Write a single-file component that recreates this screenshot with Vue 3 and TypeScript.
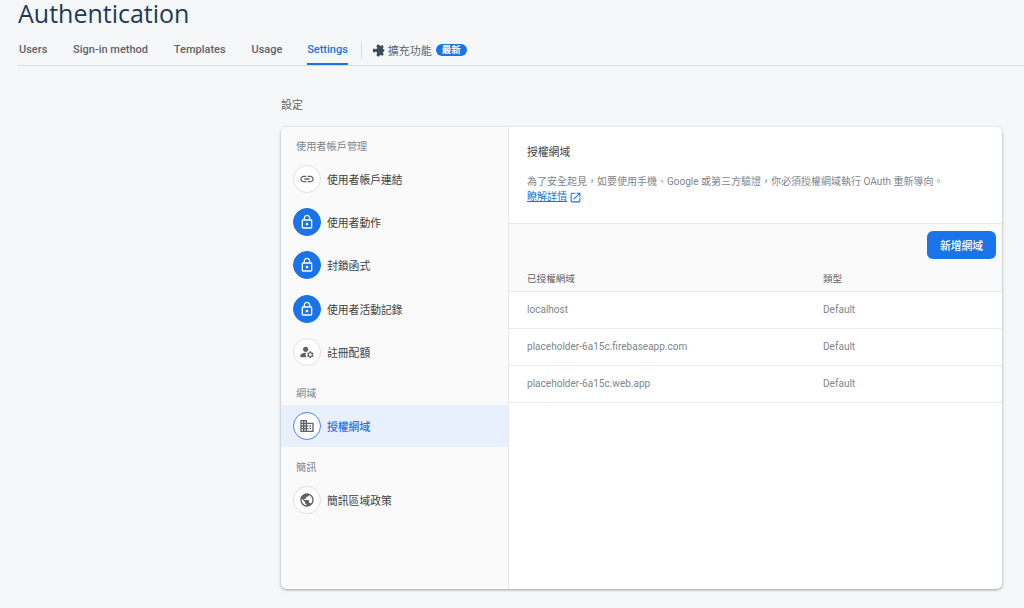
<script setup lang="ts">
interface NavItem { label: string; icon: string; locked?: boolean; active?: boolean }
interface NavGroup { title: string; cls: string; items: NavItem[] }

const icons: Record<string, string> = {
  link: 'M3.9 12c0-1.71 1.39-3.1 3.1-3.1h4V7H7c-2.76 0-5 2.24-5 5s2.24 5 5 5h4v-1.9H7c-1.71 0-3.1-1.39-3.1-3.1zM8 13h8v-2H8v2zm9-6h-4v1.9h4c1.71 0 3.1 1.39 3.1 3.1s-1.39 3.1-3.1 3.1h-4V17h4c2.76 0 5-2.24 5-5s-2.24-5-5-5z',
  lock: 'M18 8h-1V6c0-2.76-2.24-5-5-5S7 3.24 7 6v2H6c-1.1 0-2 .9-2 2v10c0 1.1.9 2 2 2h12c1.1 0 2-.9 2-2V10c0-1.1-.9-2-2-2zM9 6c0-1.66 1.34-3 3-3s3 1.34 3 3v2H9V6zm9 14H6V10h12v10zm-6-3c1.1 0 2-.9 2-2s-.9-2-2-2-2 .9-2 2 .9 2 2 2z',
  manage: 'M10 12c2.21 0 4-1.79 4-4s-1.79-4-4-4-4 1.79-4 4 1.79 4 4 4zM10.67 13.02C10.45 13.01 10.23 13 10 13c-2.42 0-4.68.67-6.61 1.82-.88.52-1.39 1.5-1.39 2.53V20h9.26c-.79-1.13-1.26-2.51-1.26-4 0-1.07.25-2.07.67-2.98zM20.75 16c0-.22-.03-.42-.06-.63l1.14-1.01-1-1.73-1.45.49c-.32-.27-.68-.48-1.08-.63L18 11h-2l-.3 1.49c-.4.15-.76.36-1.08.63l-1.45-.49-1 1.73 1.14 1.01c-.03.21-.06.41-.06.63s.03.42.06.63l-1.14 1.01 1 1.73 1.45-.49c.32.27.68.48 1.08.63L16 21h2l.3-1.49c.4-.15.76-.36 1.08-.63l1.45.49 1-1.73-1.14-1.01c.03-.21.06-.41.06-.63zM17 18c-1.1 0-2-.9-2-2s.9-2 2-2 2 .9 2 2-.9 2-2 2z',
  domain: 'M12 7V3H2v18h20V7H12zM6 19H4v-2h2v2zm0-4H4v-2h2v2zm0-4H4V9h2v2zm0-4H4V5h2v2zm4 12H8v-2h2v2zm0-4H8v-2h2v2zm0-4H8V9h2v2zm0-4H8V5h2v2zm10 12h-8v-2h2v-2h-2v-2h2v-2h-2V9h8v10zm-2-8h-2v2h2v-2zm0 4h-2v2h2v-2z',
  public: 'M12 2C6.48 2 2 6.48 2 12s4.48 10 10 10 10-4.48 10-10S17.52 2 12 2zm-1 17.93c-3.95-.49-7-3.85-7-7.93 0-.62.08-1.21.21-1.79L9 15v1c0 1.1.9 2 2 2v1.93zm6.9-2.54c-.26-.81-1-1.39-1.9-1.39h-1v-3c0-.55-.45-1-1-1H8v-2h2c.55 0 1-.45 1-1V7h2c1.1 0 2-.9 2-2v-.41c2.93 1.19 5 4.06 5 7.41 0 2.08-.8 3.97-2.1 5.39z',
}

const tabs = ['Users', 'Sign-in method', 'Templates', 'Usage', 'Settings']

const groups: NavGroup[] = [
  { title: '使用者帳戶管理', cls: 'g-first', items: [
    { label: '使用者帳戶連結', icon: 'link' },
    { label: '使用者動作', icon: 'lock', locked: true },
    { label: '封鎖函式', icon: 'lock', locked: true },
    { label: '使用者活動記錄', icon: 'lock', locked: true },
    { label: '註冊配額', icon: 'manage' },
  ] },
  { title: '網域', cls: 'g-domain', items: [{ label: '授權網域', icon: 'domain', active: true }] },
  { title: '簡訊', cls: 'g-sms', items: [{ label: '簡訊區域政策', icon: 'public' }] },
]

const rows = ['localhost', 'placeholder-6a15c.firebaseapp.com', 'placeholder-6a15c.web.app']
</script>

<template>
  <div class="page">
    <header class="head">
      <h1 class="title">Authentication</h1>
      <nav class="tabs">
        <a v-for="t in tabs" :key="t" class="tab" :class="{ on: t === 'Settings' }">{{ t }}</a>
        <span class="sep"></span>
        <span class="ext">
          <svg class="ext-ico" viewBox="0 0 24 24"><path transform="rotate(45 12 12)" d="M20.5 11H19V7c0-1.1-.9-2-2-2h-4V3.5C13 2.12 11.88 1 10.5 1S8 2.12 8 3.5V5H4c-1.1 0-1.99.9-1.99 2v3.8H3.5c1.49 0 2.7 1.21 2.7 2.7s-1.21 2.7-2.7 2.7H2V20c0 1.1.9 2 2 2h3.8v-1.5c0-1.49 1.21-2.7 2.7-2.7 1.49 0 2.7 1.21 2.7 2.7V22H17c1.1 0 2-.9 2-2v-4h1.5c1.38 0 2.5-1.12 2.5-2.5S21.88 11 20.5 11z" /></svg>
          <span class="ext-text">擴充功能</span>
          <span class="badge">最新</span>
        </span>
      </nav>
    </header>

    <main class="main">
      <div class="section-title">設定</div>
      <section class="card">
        <aside class="side">
          <div v-for="g in groups" :key="g.title" class="group" :class="g.cls">
            <div class="group-title">{{ g.title }}</div>
            <div v-for="i in g.items" :key="i.label" class="item" :class="{ active: i.active }">
              <span class="circle" :class="{ locked: i.locked }">
                <svg viewBox="0 0 24 24" class="ico"><path :d="icons[i.icon]" /></svg>
              </span>
              <span class="item-label">{{ i.label }}</span>
            </div>
          </div>
        </aside>
        <div class="content">
          <div class="intro">
            <div class="intro-title">授權網域</div>
            <p class="intro-text">為了安全起見&#xFF0C;如要使用手機、Google 或第三方驗證&#xFF0C;你必須授權網域執行 OAuth 重新導向。</p>
            <a class="more"><span class="more-text">瞭解詳情</span>
              <svg viewBox="0 0 24 24" class="new-ico"><path d="M19 19H5V5h7V3H5c-1.11 0-2 .9-2 2v14c0 1.1.89 2 2 2h14c1.1 0 2-.9 2-2v-7h-2v7zM14 3v2h3.59l-9.83 9.83 1.41 1.41L19 6.41V10h2V3h-7z" /></svg>
            </a>
          </div>
          <div class="toolbar">
            <div class="btn-row"><button class="btn" type="button">新增網域</button></div>
            <div class="row head-row"><span class="c1">已授權網域</span><span class="c2">類型</span></div>
          </div>
          <div v-for="r in rows" :key="r" class="row data-row">
            <span class="c1">{{ r }}</span><span class="c2">Default</span>
          </div>
        </div>
      </section>
    </main>
  </div>
</template>

<style>
html, body { margin: 0; background: #f6f7f9; }
</style>

<style scoped>
.page {
  width: 1024px;
  height: 608px;
  overflow: hidden;
  background: #f6f7f9;
  font-family: Roboto, "Noto Sans CJK TC", sans-serif;
  box-sizing: border-box;
}
.head { margin-left: 18px; border-bottom: 1px solid #dadce0; height: 66px; box-sizing: border-box; }
.title {
  margin: 0;
  height: 38px;
  font-family: "Open Sans", Roboto, sans-serif;
  font-weight: 400;
  font-size: 25px;
  line-height: 27px;
  color: #1f3a52;
}
.tabs { display: flex; align-items: stretch; height: 27px; }
.tab {
  margin-right: 23.8px;
  font-size: 11px;
  font-weight: 500;
  line-height: 24px;
  color: #5f6368;
  box-sizing: border-box;
  height: 27px;
  padding: 0 1px;
}
.tab.on { color: #1a73e8; border-bottom: 2px solid #1a73e8; margin-right: 13px; padding: 0; }
.sep { width: 1px; height: 18px; margin-top: 3px; background: #dadce0; }
.ext { display: flex; align-items: center; height: 24px; margin-left: 11px; }
.ext-ico { width: 13px; height: 13px; fill: #3c4a5c; }
.ext-text { margin-left: 2px; font-size: 11px; color: #5f6368; }
.badge {
  margin-left: 4px;
  background: #1a73e8;
  color: #fff;
  font-size: 9.5px;
  font-weight: 700;
  line-height: 12px;
  padding: 0 6px;
  border-radius: 6px;
}

.main { padding-left: 281px; width: 721px; }
.section-title { font-size: 11px; color: #5f6368; line-height: 14px; padding-top: 33px; height: 61px; box-sizing: border-box; }
.card {
  display: flex;
  height: 462px;
  border-radius: 6px;
  background: #fff;
  box-shadow: 0 1px 2px rgba(60, 64, 67, 0.3), 0 1px 3px 1px rgba(60, 64, 67, 0.15);
  overflow: hidden;
}
.side {
  width: 228px;
  flex: none;
  background: #fafafa;
  border-right: 1px solid #e8e8e8;
  box-sizing: border-box;
}
.group-title { font-size: 10.2px; color: #80868b; line-height: 14px; padding-left: 15px; }
.g-first { padding-top: 13px; }
.g-first .group-title { height: 17px; }
.g-domain { padding-top: 14px; }
.g-domain .group-title { height: 18px; }
.g-sms { padding-top: 14px; }
.g-sms .group-title { height: 17px; }
.item { display: flex; align-items: center; height: 43.3px; padding-left: 12px; }
.item.active { background: #e8f0fe; height: 42px; }
.circle {
  width: 28px;
  height: 28px;
  box-sizing: border-box;
  border-radius: 50%;
  border: 1px solid #e0e0e0;
  background: #fff;
  display: flex;
  align-items: center;
  justify-content: center;
  flex: none;
}
.circle.locked { background: #1a73e8; border-color: #1a73e8; }
.active .circle { border-color: #4285f4; }
.ico { width: 16px; height: 16px; fill: #5f6368; }
.locked .ico { fill: #fff; }
.item-label { margin-left: 6px; font-size: 10.8px; color: #3c4043; }
.active .item-label { color: #1a73e8; font-weight: 500; }

.content { flex: 1; min-width: 0; background: #fff; }
.intro { height: 97px; box-sizing: border-box; padding: 18px 18px 0; border-bottom: 1px solid #e8e8e8; }
.intro-title { font-size: 10.8px; line-height: 15px; color: #3c4043; }
.intro-text { margin: 14px 0 0; font-size: 10px; line-height: 16px; color: #80868b; white-space: nowrap; }
.more { display: flex; align-items: center; color: #1a73e8; font-size: 10px; line-height: 14px; }
.more-text { text-decoration: underline; }
.new-ico { width: 13px; height: 13px; fill: #1a73e8; margin-left: 2px; }
.toolbar { background: #fafafa; height: 68px; box-sizing: border-box; border-bottom: 1px solid #e8e8e8; }
.btn-row { display: flex; justify-content: flex-end; padding: 7px 6px 0 0; height: 36px; box-sizing: border-box; }
.btn {
  width: 69px;
  height: 28px;
  border: 0;
  border-radius: 6px;
  background: #1a73e8;
  color: #fff;
  font: 500 10.8px Roboto, "Noto Sans CJK TC", sans-serif;
  padding: 0;
}
.row { display: flex; align-items: center; padding-left: 18px; font-size: 10.05px; color: #80868b; }
.head-row { height: 31px; padding-top: 4px; box-sizing: border-box; color: #5f6368; font-size: 9.6px; }
.data-row { height: 37px; box-sizing: border-box; border-bottom: 1px solid #e8eaed; padding-bottom: 1px; }
.c1 { width: 296px; flex: none; }
</style>
